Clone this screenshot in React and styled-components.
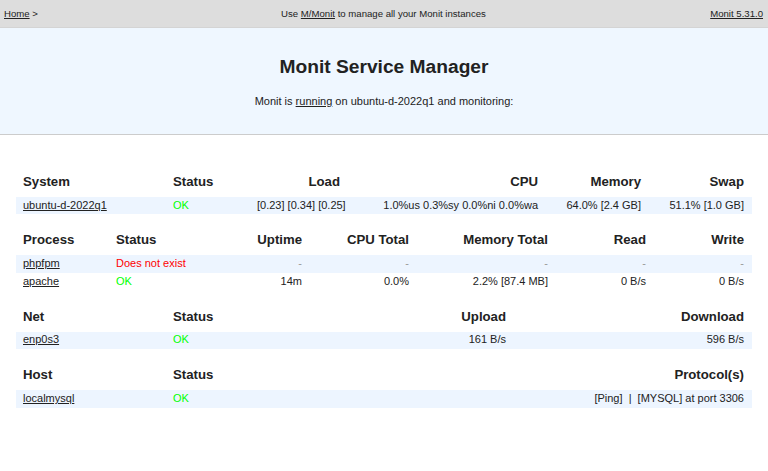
import React from 'react';
import styled, { createGlobalStyle } from 'styled-components';

const Global = createGlobalStyle`
  html, body { margin: 0; padding: 0; background: #fff; }
  body {
    font-family: "Liberation Sans", Arial, Helvetica, sans-serif;
    color: #222;
  }
  a { color: #222; text-decoration: underline; }
`;

const Nav = styled.nav`
  display: grid;
  grid-template-columns: 1fr auto 1fr;
  align-items: center;
  height: 28px;
  box-sizing: border-box;
  padding: 0 5px 0 4px;
  background: #ddd;
  border-bottom: 1px solid #d4d4d4;
  font-size: 9.6px;
  line-height: 12px;
`;

const NavSide = styled.div`
  text-align: ${(p) => p.$align || 'left'};
  white-space: nowrap;
`;

const Banner = styled.header`
  background: #eff7ff;
  border-bottom: 1px solid #ccc;
  padding: 27.5px 0 26.1px;
  text-align: center;
  margin-bottom: 20.6px;
`;

const Title = styled.h1`
  margin: 0;
  font-size: 19.2px;
  line-height: 22px;
  font-weight: bold;
  color: #222;
`;

const Lead = styled.p`
  margin: 16.4px 0 0;
  font-size: 11px;
  line-height: 14px;
`;

const Table = styled.table`
  width: calc(100% - 32px);
  margin: 0 16px;
  border-collapse: collapse;
  border: 0;
  table-layout: fixed;
`;

const HeadCell = styled.th`
  padding: 19.2px 8px 8.2px 7px;
  font-size: 13.2px;
  line-height: 13.8px;
  font-weight: bold;
  color: #222;
  text-align: ${(p) => p.$align || 'left'};
  white-space: nowrap;
`;

const Row = styled.tr`
  background: ${(p) => (p.$stripe ? '#edf5ff' : 'transparent')};
`;

const Cell = styled.td`
  padding: 1.8px 8px 2.3px 7px;
  font-size: 11px;
  line-height: 13.4px;
  text-align: ${(p) => p.$align || 'left'};
  white-space: nowrap;
  overflow: hidden;
`;

const tones = { ok: '#00ff00', bad: '#ff0000', muted: '#999999' };

const Tone = styled.span`
  color: ${(p) => tones[p.$tone] || '#222'};
`;

function v(text, tone) {
  return { text, tone };
}

const tables = [
  {
    cols: [150, 84, 98, 198, 103, 103],
    head: [
      ['System', 'left'],
      ['Status', 'left'],
      ['Load', 'right'],
      ['CPU', 'right'],
      ['Memory', 'right'],
      ['Swap', 'right'],
    ],
    rows: [
      [
        v('ubuntu-d-2022q1', 'link'),
        v('OK', 'ok'),
        v('[0.23]\u00a0[0.34]\u00a0[0.25]'),
        v('1.0%us 0.3%sy 0.0%ni 0.0%wa'),
        v('64.0% [2.4 GB]'),
        v('51.1% [1.0 GB]'),
      ],
    ],
  },
  {
    cols: [93, 111, 90, 107, 139, 98, 98],
    head: [
      ['Process', 'left'],
      ['Status', 'left'],
      ['Uptime', 'right'],
      ['CPU Total', 'right'],
      ['Memory Total', 'right'],
      ['Read', 'right'],
      ['Write', 'right'],
    ],
    rows: [
      [
        v('phpfpm', 'link'),
        v('Does not exist', 'bad'),
        v('-', 'muted'),
        v('-', 'muted'),
        v('-', 'muted'),
        v('-', 'muted'),
        v('-', 'muted'),
      ],
      [
        v('apache', 'link'),
        v('OK', 'ok'),
        v('14m'),
        v('0.0%'),
        v('2.2% [87.4 MB]'),
        v('0 B/s'),
        v('0 B/s'),
      ],
    ],
  },
  {
    cols: [150, 150, 198, 238],
    head: [
      ['Net', 'left'],
      ['Status', 'left'],
      ['Upload', 'right'],
      ['Download', 'right'],
    ],
    rows: [[v('enp0s3', 'link'), v('OK', 'ok'), v('161 B/s'), v('596 B/s')]],
  },
  {
    cols: [150, 150, 436],
    head: [
      ['Host', 'left'],
      ['Status', 'left'],
      ['Protocol(s)', 'right'],
    ],
    rows: [
      [
        v('localmysql', 'link'),
        v('OK', 'ok'),
        v('[Ping]\u00a0\u00a0|\u00a0\u00a0[MYSQL] at port 3306'),
      ],
    ],
  },
];

function StatusTable({ cols, head, rows }) {
  return (
    <Table>
      <colgroup>
        {cols.map((w, i) => (
          <col key={i} style={{ width: w }} />
        ))}
      </colgroup>
      <thead>
        <tr>
          {head.map(([label, align]) => (
            <HeadCell key={label} $align={align}>
              {label}
            </HeadCell>
          ))}
        </tr>
      </thead>
      <tbody>
        {rows.map((row, r) => (
          <Row key={r} $stripe={r % 2 === 0}>
            {row.map((c, i) => (
              <Cell key={i} $align={head[i][1]}>
                {c.tone === 'link' ? (
                  <a href="#">{c.text}</a>
                ) : (
                  <Tone $tone={c.tone}>{c.text}</Tone>
                )}
              </Cell>
            ))}
          </Row>
        ))}
      </tbody>
    </Table>
  );
}

export default function App() {
  return (
    <>
      <Global />
      <Nav>
        <NavSide>
          <a href="#">Home</a>&nbsp;&gt;
        </NavSide>
        <NavSide $align="center">
          Use <a href="#">M/Monit</a> to manage all your Monit instances
        </NavSide>
        <NavSide $align="right">
          <a href="#">Monit 5.31.0</a>
        </NavSide>
      </Nav>
      <Banner>
        <Title>Monit Service Manager</Title>
        <Lead>
          Monit is <a href="#">running</a> on ubuntu-d-2022q1 and monitoring:
        </Lead>
      </Banner>
      {tables.map((t, i) => (
        <StatusTable key={i} {...t} />
      ))}
    </>
  );
}
